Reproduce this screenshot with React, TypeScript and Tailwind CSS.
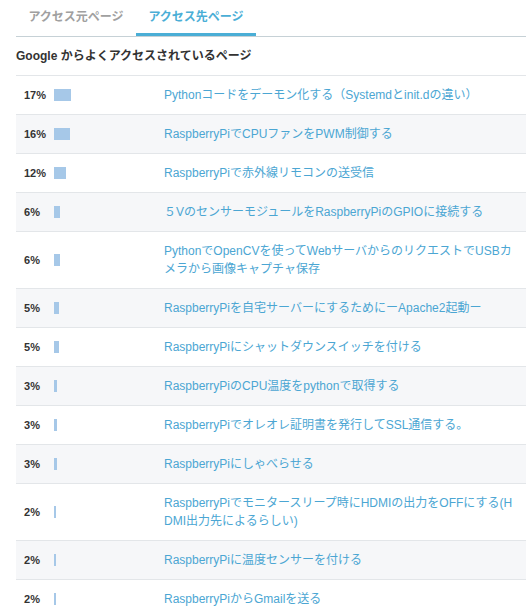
const pages = [
  { pct: 17, title: "Pythonコードをデーモン化する（Systemdとinit.dの違い）" },
  { pct: 16, title: "RaspberryPiでCPUファンをPWM制御する" },
  { pct: 12, title: "RaspberryPiで赤外線リモコンの送受信" },
  { pct: 6, title: "５VのセンサーモジュールをRaspberryPiのGPIOに接続する" },
  { pct: 6, title: "PythonでOpenCVを使ってWebサーバからのリクエストでUSBカメラから画像キャプチャ保存" },
  { pct: 5, title: "RaspberryPiを自宅サーバーにするためにーApache2起動ー" },
  { pct: 5, title: "RaspberryPiにシャットダウンスイッチを付ける" },
  { pct: 3, title: "RaspberryPiのCPU温度をpythonで取得する" },
  { pct: 3, title: "RaspberryPiでオレオレ証明書を発行してSSL通信する。" },
  { pct: 3, title: "RaspberryPiにしゃべらせる" },
  { pct: 2, title: "RaspberryPiでモニタースリープ時にHDMIの出力をOFFにする(HDMI出力先によるらしい)" },
  { pct: 2, title: "RaspberryPiに温度センサーを付ける" },
  { pct: 2, title: "RaspberryPiからGmailを送る" },
];

function Tabs() {
  return (
    <div className="flex border-b border-[#c6d1d6]">
      <div className="flex h-[36px] w-[120px] items-center justify-center pb-[3px] text-[12px] font-bold text-[#a0a0a0]">
        アクセス元ページ
      </div>
      <div className="flex h-[36px] w-[120px] items-center justify-center border-b-[3px] border-[#4aaed6] text-[12px] font-bold text-[#4aaed6]">
        アクセス先ページ
      </div>
    </div>
  );
}

function PageRow({ pct, title, odd }: { pct: number; title: string; odd: boolean }) {
  return (
    <div
      className={`flex items-center border-b border-[#e3e6e9] py-[10px] ${odd ? "bg-white" : "bg-[#f6f7f9]"}`}
    >
      <div className="w-[38px] shrink-0 pl-[8px] text-[11px] font-bold leading-[18px] text-[#333]">
        {pct}%
      </div>
      <div className="w-[110px] shrink-0">
        {/* bar width follows the share, 1px per percent */}
        <div className="h-[12px] bg-[#a6c8e8]" style={{ width: `${pct}px` }} />
      </div>
      <div className="min-w-0 flex-1 pr-[10px] text-[12px] leading-[18px] text-[#4ba6d3] break-all">
        {title}
      </div>
    </div>
  );
}

export default function App() {
  return (
    <div
      className="min-h-screen bg-white"
      style={{ fontFamily: '"Liberation Sans", "Noto Sans CJK JP", sans-serif' }}
    >
      <div className="ml-[16px] w-[510px]">
        <Tabs />
        <h2 className="border-b border-[#e3e6e9] py-[10px] text-[12px] font-bold leading-[18px] text-[#333]">
          Google からよくアクセスされているページ
        </h2>
        <div>
          {pages.map((p, i) => (
            <PageRow key={i} pct={p.pct} title={p.title} odd={i % 2 === 0} />
          ))}
        </div>
      </div>
    </div>
  );
}
